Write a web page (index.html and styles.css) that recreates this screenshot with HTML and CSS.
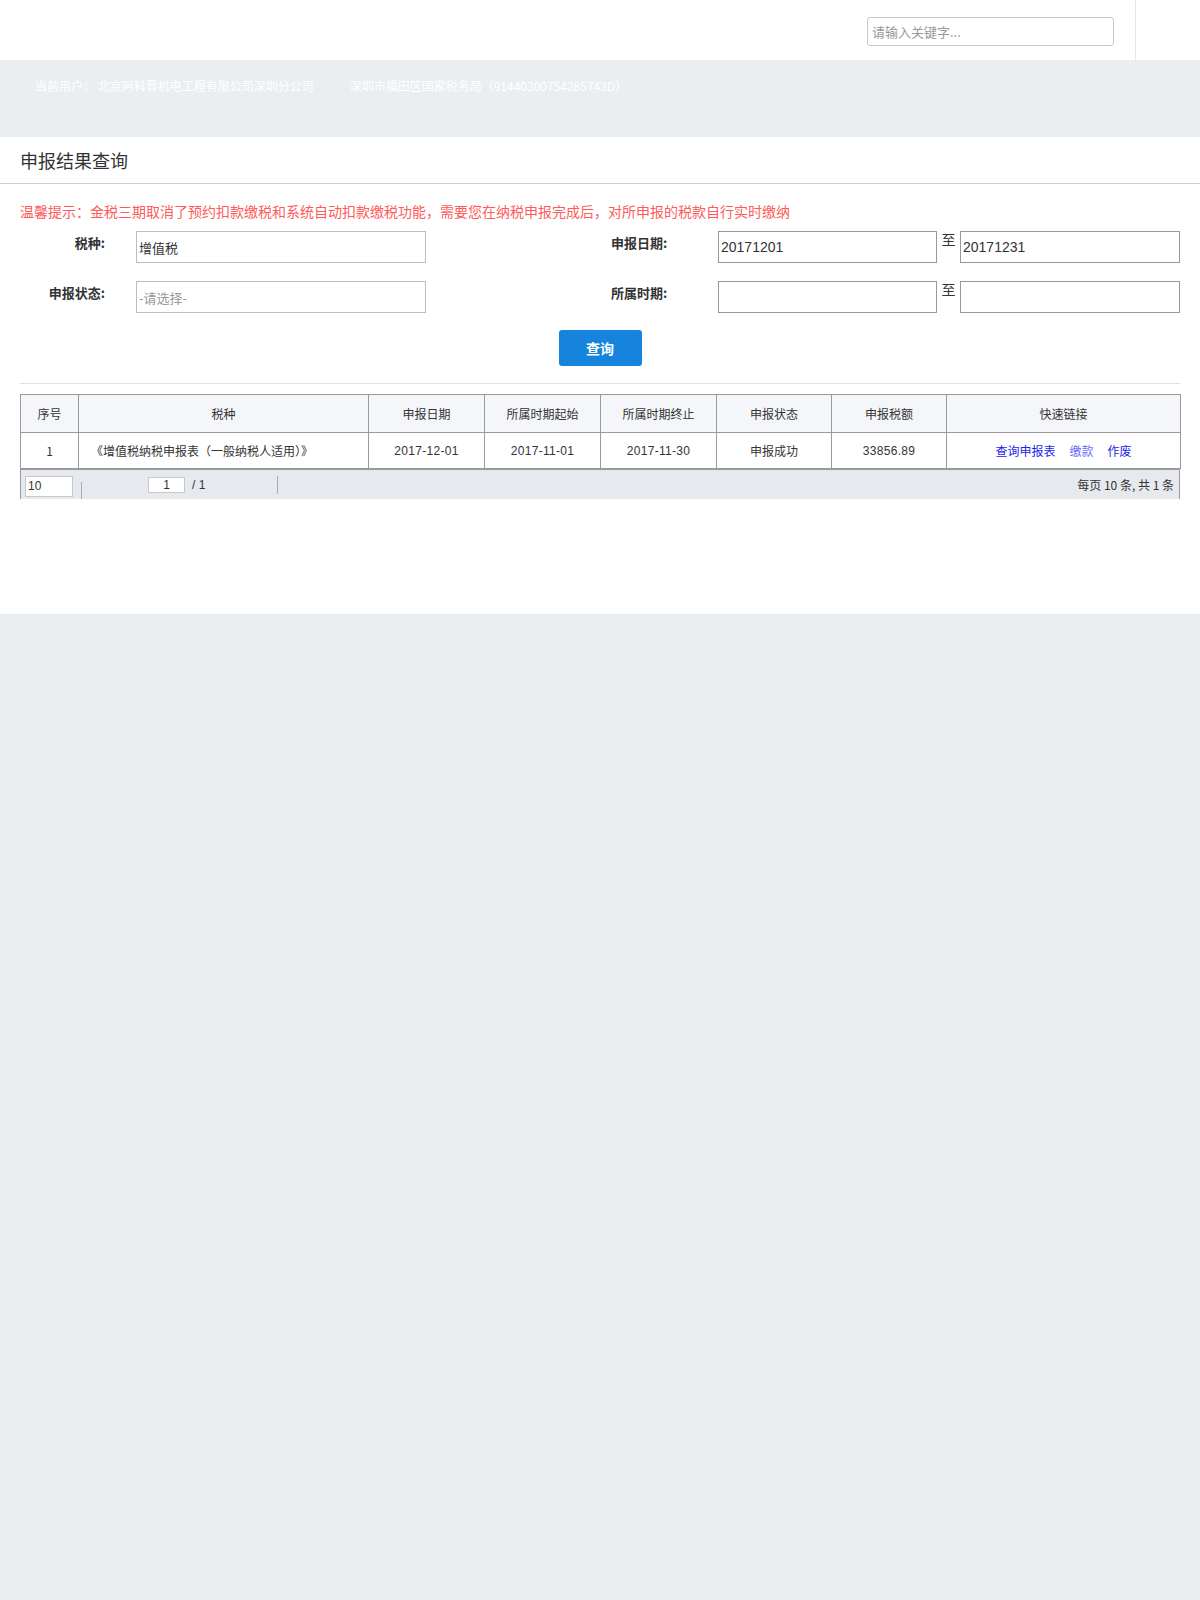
FILE: index.html
```html
<!DOCTYPE html>
<html lang="zh-CN">
<head>
<meta charset="utf-8">
<title>申报结果查询</title>
<link rel="stylesheet" href="styles.css">
</head>
<body>
<header class="topbar">
  <div class="search-wrap"><input class="search" type="text" placeholder="请输入关键字..."></div>
  <div class="top-side"></div>
</header>
<div class="userbar">
  <span class="user">当前用户： 北京阿科晋机电工程有限公司深圳分公司</span>
  <span class="org">深圳市福田区国家税务局（91440300754285743D）</span>
</div>
<main class="panel">
  <h2 class="title">申报结果查询</h2>
  <div class="content">
    <p class="tip">温馨提示：金税三期取消了预约扣款缴税和系统自动扣款缴税功能，需要您在纳税申报完成后，对所申报的税款自行实时缴纳</p>
    <div class="form">
      <div class="row">
        <div class="group-l">
          <label class="lbl-l">税种:</label>
          <div class="box box-l"><span class="val-cn">增值税</span></div>
        </div>
        <div class="group-r">
          <label class="lbl-r">申报日期:</label>
          <div class="box box-d1"><span class="val">20171201</span></div>
          <span class="to">至</span>
          <div class="box box-d2"><span class="val">20171231</span></div>
        </div>
      </div>
      <div class="row">
        <div class="group-l">
          <label class="lbl-l">申报状态:</label>
          <div class="box box-l"><span class="ph">-请选择-</span></div>
        </div>
        <div class="group-r">
          <label class="lbl-r">所属时期:</label>
          <div class="box box-d1"></div>
          <span class="to">至</span>
          <div class="box box-d2"></div>
        </div>
      </div>
    </div>
    <div class="actions"><button class="btn" type="button">查询</button></div>
    <div class="divider"></div>
    <table class="grid">
      <colgroup>
        <col class="c1"><col class="c2"><col class="c3"><col class="c4"><col class="c5"><col class="c6"><col class="c7"><col class="c8">
      </colgroup>
      <thead>
        <tr><th>序号</th><th>税种</th><th>申报日期</th><th>所属时期起始</th><th>所属时期终止</th><th>申报状态</th><th>申报税额</th><th>快速链接</th></tr>
      </thead>
      <tbody>
        <tr>
          <td>1</td>
          <td class="left">《增值税纳税申报表（一般纳税人适用）》</td>
          <td class="num">2017-12-01</td>
          <td class="num">2017-11-01</td>
          <td class="num">2017-11-30</td>
          <td>申报成功</td>
          <td class="num">33856.89</td>
          <td class="links"><a href="#">查询申报表</a><a href="#" class="lite">缴款</a><a href="#">作废</a></td>
        </tr>
      </tbody>
    </table>
    <div class="pager">
      <div class="pg-size">10</div>
      <span class="sep sep1"></span>
      <div class="pg-page">1</div>
      <span class="pg-total">/ 1</span>
      <span class="sep sep2"></span>
      <span class="pg-info">每页 10 条, 共 1 条</span>
    </div>
  </div>
</main>
</body>
</html>
```
FILE: styles.css
```css
* { box-sizing: border-box; }
html, body { margin: 0; padding: 0; }
body {
  background: #ebeef0;
  font-family: "Noto Sans CJK SC", "Liberation Sans", sans-serif;
  color: #333;
  width: 1200px;
}

.topbar {
  height: 60px;
  background: #fff;
  display: flex;
  justify-content: flex-end;
}
.search-wrap { padding-top: 17px; margin-right: 21px; }
.search {
  width: 247px;
  height: 29px;
  border: 1px solid #c8c8c8;
  border-radius: 3px;
  padding: 0 4px;
  font-family: "Noto Sans CJK SC", sans-serif;
  font-size: 13px;
  color: #333;
  outline: none;
}
.search::placeholder { color: #999; }
.top-side { width: 65px; border-left: 1px solid #e8e8e8; }

.userbar {
  height: 77px;
  padding: 18px 0 0 35px;
  font-size: 12px;
  line-height: 16px;
  color: #fff;
  display: flex;
  gap: 36px;
}

.panel {
  background: #fff;
  height: 477px;
}
.title {
  margin: 0;
  height: 47px;
  line-height: 46px;
  padding-left: 20px;
  font-size: 18px;
  font-weight: normal;
  color: #333;
  border-bottom: 1px solid #cfcfcf;
}
.content { padding: 0 20px; }
.tip {
  margin: 0;
  padding-top: 17px;
  font-size: 14px;
  line-height: 20px;
  color: #ff5a5a;
}
.form { margin-top: 10px; display: flex; flex-direction: column; gap: 18px; }
.row { display: flex; align-items: flex-start; }
.group-l { display: flex; align-items: flex-start; }
.group-r { display: flex; align-items: flex-start; margin-left: auto; }
.lbl-l, .lbl-r {
  font-size: 13px;
  font-weight: bold;
  line-height: 24px;
  color: #333;
}
.lbl-l { width: 85px; text-align: right; margin-right: 31px; }
.lbl-r { width: 61px; margin-right: 46px; }
.box {
  height: 32px;
  border: 1px solid #bdbdbd;
  display: flex;
  align-items: center;
  padding-left: 2px;
}
.box-l { width: 290px; }
.box-d1 { width: 219px; border-color: #999; }
.box-d2 { width: 220px; border-color: #999; }
.to { width: 23px; text-align: center; font-size: 14px; line-height: 16px; color: #333; }
.val { font-family: "Liberation Sans", sans-serif; font-size: 14px; color: #333; }
.val-cn { font-size: 13px; color: #333; }
.ph { font-size: 13px; color: #999; }

.actions { display: flex; justify-content: center; margin-top: 17px; }
.btn {
  width: 83px;
  height: 36px;
  border: 0;
  border-radius: 3px;
  background: #1684dc;
  color: #fff;
  font-family: "Noto Sans CJK SC", sans-serif;
  font-size: 14px;
  font-weight: bold;
}
.divider { margin-top: 17px; height: 1px; background: #e0e0e0; }

.grid {
  margin-top: 10px;
  width: 1160px;
  table-layout: fixed;
  border-collapse: collapse;
  font-size: 12px;
  color: #333;
}
.c1 { width: 58px; } .c2 { width: 290px; } .c3 { width: 116px; } .c4 { width: 116px; }
.c5 { width: 116px; } .c6 { width: 115px; } .c7 { width: 115px; } .c8 { width: 234px; }
.grid th, .grid td {
  border: 1px solid #9a9a9a;
  text-align: center;
  font-weight: normal;
  padding: 0;
}
.grid th { height: 38px; background: #f5f6fa; }
.grid td { height: 36px; }
.grid td.left { text-align: left; padding-left: 12px; }
.grid td.num { font-family: "Liberation Sans", sans-serif; letter-spacing: 0.3px; }
.links a { color: #2222ee; text-decoration: none; margin: 0 7px; }
.links a.lite { color: #6a6aff; }

.pager {
  height: 30px;
  background: #e6e9ed;
  border-left: 1px solid #9a9a9a;
  border-right: 1px solid #9a9a9a;
  border-top: 1px solid #9a9a9a;
  display: flex;
  align-items: flex-start;
  font-size: 12px;
}
.pg-size {
  margin: 6px 0 0 4px;
  width: 48px;
  height: 21px;
  background: #fff;
  border: 1px solid #c8c8c8;
  font-family: "Liberation Sans", sans-serif;
  font-size: 12px;
  line-height: 19px;
  padding-left: 2px;
}
.sep { width: 1px; background: #aaa; }
.sep1 { height: 17px; margin: 12px 0 0 8px; }
.pg-page {
  margin: 7px 0 0 66px;
  width: 37px;
  height: 16px;
  background: #fff;
  border: 1px solid #c8c8c8;
  text-align: center;
  font-family: "Liberation Sans", sans-serif;
  font-size: 12px;
  line-height: 14px;
}
.pg-total { margin: 7px 0 0 7px; font-family: "Liberation Sans", sans-serif; line-height: 16px; }
.sep2 { height: 18px; margin: 6px 0 0 72px; }
.pg-info { margin-left: auto; margin-right: 5px; margin-top: 6px; line-height: 18px; color: #333; }
```
